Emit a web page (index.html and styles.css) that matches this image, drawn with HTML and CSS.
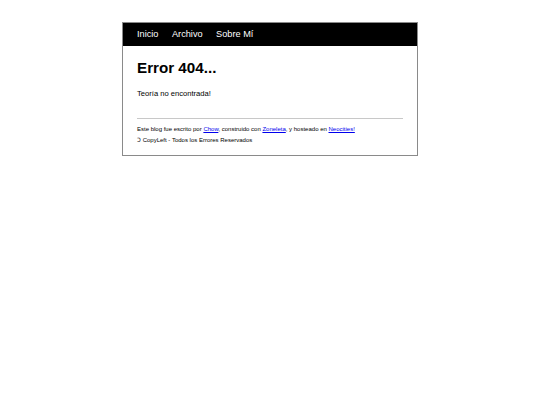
FILE: index.html
```html
<!DOCTYPE html>
<html lang="es">
<head>
<meta charset="utf-8">
<title>Error 404</title>
<link rel="stylesheet" href="styles.css">
</head>
<body>
<div class="page">
  <nav class="nav">
    <a href="#">Inicio</a>
    <a href="#">Archivo</a>
    <a href="#">Sobre Mí</a>
  </nav>
  <main class="content">
    <h1 class="title">Error 404...</h1>
    <p class="text">Teoría no encontrada!</p>
    <hr class="rule">
    <footer class="footer">
      <div>Este blog fue escrito por <a href="#">Chow</a>, construido con <a href="#">Zoneleta</a>, y hosteado en <a href="#">Neocities!</a></div>
      <div>Ↄ CopyLeft - Todos los Errores Reservados</div>
    </footer>
  </main>
</div>
</body>
</html>
```
FILE: styles.css
```css
html, body {
  margin: 0;
  padding: 0;
  background: #fff;
}
body {
  font-family: "Liberation Sans", Arial, sans-serif;
  color: #000;
}
.page {
  width: 296px;
  box-sizing: border-box;
  margin: 22px auto 0;
  border: 1px solid #8a8a8a;
}
.nav {
  background: #000;
  height: 23px;
  display: flex;
  align-items: center;
  gap: 13.5px;
  padding-left: 14px;
  padding-bottom: 1px;
  box-sizing: border-box;
}
.nav a {
  color: #fff;
  text-decoration: none;
  font-size: 9.2px;
}
.content {
  padding: 13px 14px 9px;
}
.title {
  margin: 0;
  font-size: 15.2px;
  font-weight: bold;
  line-height: 17px;
}
.text {
  margin: 13px 0 0;
  font-size: 7.6px;
  line-height: 9px;
}
.rule {
  margin: 20px 0 0;
  border: 0;
  border-top: 1px solid #c8c8c8;
  height: 0;
}
.footer {
  margin-top: 5px;
  font-size: 6px;
  line-height: 11px;
}
.footer a {
  color: #0000ee;
}
```
